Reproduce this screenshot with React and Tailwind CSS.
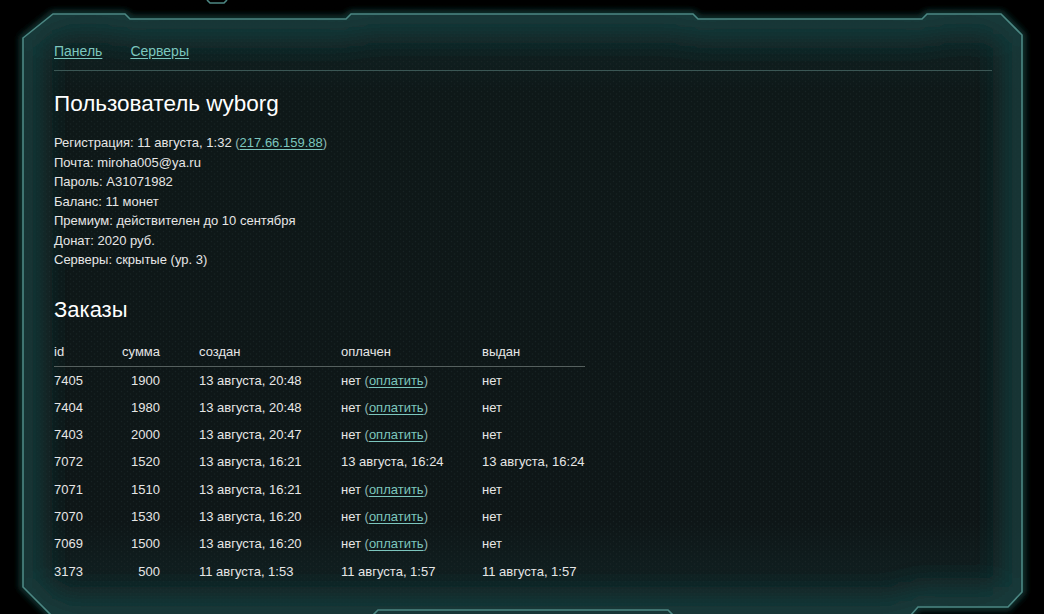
const info = [
  ["Почта", "miroha005@ya.ru"],
  ["Пароль", "A31071982"],
  ["Баланс", "11 монет"],
  ["Премиум", "действителен до 10 сентября"],
  ["Донат", "2020 руб."],
  ["Серверы", "скрытые (ур. 3)"],
];

const orders = [
  ["7405", "1900", "13 августа, 20:48", null, "нет"],
  ["7404", "1980", "13 августа, 20:48", null, "нет"],
  ["7403", "2000", "13 августа, 20:47", null, "нет"],
  ["7072", "1520", "13 августа, 16:21", "13 августа, 16:24", "13 августа, 16:24"],
  ["7071", "1510", "13 августа, 16:21", null, "нет"],
  ["7070", "1530", "13 августа, 16:20", null, "нет"],
  ["7069", "1500", "13 августа, 16:20", null, "нет"],
  ["3173", "500", "11 августа, 1:53", "11 августа, 1:57", "11 августа, 1:57"],
];

const FRAME =
  "M23,38 L53,14 L125,14 L130,19 L346,19 L351,14 L693,14 L698,19 L922,19 L927,14 L1001,14 L1022,35 L1022,592 L1008,607 L918,607 L910,616 L52,616 L23,587 Z";

const Frame = () => (
  <svg className="absolute inset-0" width="1044" height="614" viewBox="0 0 1044 614">
    <defs>
      <clipPath id="panel">
        <path d={FRAME} />
      </clipPath>
      <filter id="blur" x="-10%" y="-10%" width="120%" height="120%">
        <feGaussianBlur stdDeviation="14" />
      </filter>
      <filter id="glow" x="-10%" y="-10%" width="120%" height="120%">
        <feGaussianBlur stdDeviation="3" />
      </filter>
      <linearGradient id="shade" x1="0" y1="0" x2="0" y2="1">
        <stop offset="0" stopColor="#11292a" />
        <stop offset="0.15" stopColor="#0e1818" />
        <stop offset="0.85" stopColor="#0e1617" />
        <stop offset="1" stopColor="#112526" />
      </linearGradient>
      <pattern id="hex" width="6" height="5" patternUnits="userSpaceOnUse">
        <circle cx="1.5" cy="1.5" r="0.7" fill="#1e2a2b" />
        <circle cx="4.5" cy="4" r="0.7" fill="#1e2a2b" />
      </pattern>
    </defs>
    <path d={FRAME} fill="none" stroke="#16403e" strokeWidth="6" filter="url(#glow)" />
    <g clipPath="url(#panel)">
      <rect width="1044" height="614" fill="url(#shade)" />
      <rect width="1044" height="614" fill="url(#hex)" opacity="0.6" />
      <path d={FRAME} fill="none" stroke="#163b3a" strokeWidth="40" filter="url(#blur)" />
    </g>
    <path d={FRAME} fill="none" stroke="#4c8783" strokeWidth="1.6" />
    <path d="M372,616 L378,610 L668,610 L674,616" fill="none" stroke="#4c8783" strokeWidth="1.6" />
    <path d="M207,0 L210,3 L224,3 L227,0" fill="none" stroke="#4c8783" strokeWidth="1.6" />
  </svg>
);

const Link = ({ children }) => (
  <a href="#" className="text-[#7cc6be] underline underline-offset-[1.5px]">
    {children}
  </a>
);

const Pay = () => (
  <>
    нет <span className="text-[#8fb5b1]">(</span>
    <Link>оплатить</Link>
    <span className="text-[#8fb5b1]">)</span>
  </>
);

const Row = ({ cells, head }) => (
  <div
    className={
      "grid grid-cols-[67px_39px_39px_142px_141px_103px] whitespace-nowrap " +
      (head ? "leading-[14px] pb-[7px] border-b border-[#56605f]" : "leading-[27.3px]")
    }
  >
    <span>{cells[0]}</span>
    <span className="text-right">{cells[1]}</span>
    <span />
    <span>{cells[2]}</span>
    <span>{cells[3] === null ? <Pay /> : cells[3]}</span>
    <span>{cells[4]}</span>
  </div>
);

export default function App() {
  return (
    <div
      className="relative w-[1044px] h-[614px] bg-black overflow-hidden text-[#e6e6e6]"
      style={{ fontFamily: '"Liberation Sans", Arial, sans-serif' }}
    >
      <Frame />
      <div className="relative pl-[54px] pr-[52px] pt-[42px]">
        <nav className="flex gap-[28px] text-[14px] leading-[18px] pb-[10px] border-b border-[#3b5755]">
          <Link>Панель</Link>
          <Link>Серверы</Link>
        </nav>
        <h1 className="mt-[20px] text-[22.5px] leading-[26px] text-white">Пользователь wyborg</h1>
        <div className="mt-[16px] text-[13px] leading-[19.5px]">
          <div>
            Регистрация: 11 августа, 1:32 <span className="text-[#8fb5b1]">(</span>
            <Link>217.66.159.88</Link>
            <span className="text-[#8fb5b1]">)</span>
          </div>
          {info.map(([k, v]) => (
            <div key={k}>
              {k}: {v}
            </div>
          ))}
        </div>
        <h2 className="mt-[27px] text-[22px] leading-[26px] text-white">Заказы</h2>
        <div className="mt-[22px] w-[531px] text-[13px]">
          <Row head cells={["id", "сумма", "создан", "оплачен", "выдан"]} />
          {orders.map((o) => (
            <Row key={o[0]} cells={o} />
          ))}
        </div>
      </div>
    </div>
  );
}
